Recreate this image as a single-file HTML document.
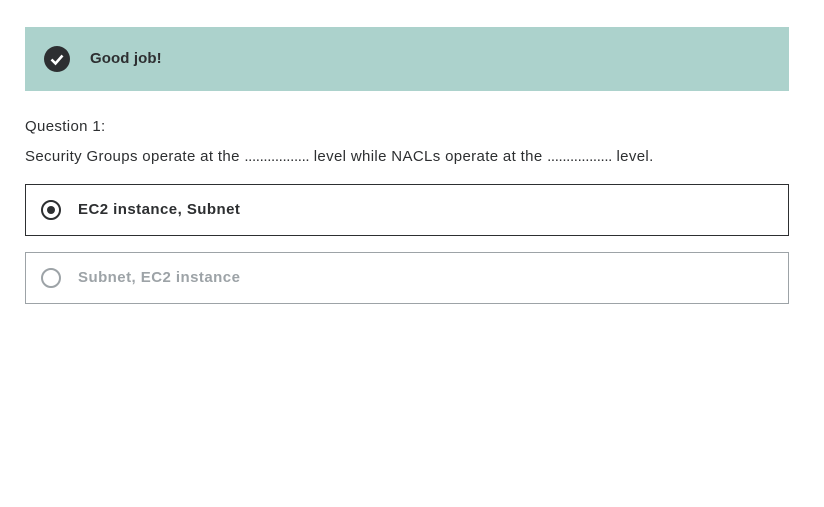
<!DOCTYPE html>
<html><head><style>
body{margin:0;background:#fff;font-family:"Liberation Sans",sans-serif;color:#2d2f31;width:824px;height:507px;overflow:hidden;position:relative}
.banner{position:absolute;left:25px;top:27px;width:764px;height:64px;background:#acd2cc}
.chk{position:absolute;left:19px;top:19px;width:26px;height:26px;border-radius:50%;background:#2d2f31}
.banner b{position:absolute;left:65px;top:23px;font-size:15px;letter-spacing:.1px}
.q{position:absolute;left:25px;font-size:15px;letter-spacing:.35px;white-space:nowrap}
.d{letter-spacing:-.35px}
.opt{position:absolute;left:25px;width:762px;height:50px;border:1px solid #2d2f31}
.opt .r{position:absolute;left:15px;top:15px;width:16px;height:16px;border:2px solid #2d2f31;border-radius:50%}
.opt .r i{position:absolute;left:4px;top:4px;width:8px;height:8px;border-radius:50%;background:#2d2f31}
.opt b{position:absolute;left:52px;top:16px;font-size:15px;letter-spacing:.45px}
.dis{border-color:#9da3a7;color:#9da3a7}
.dis .r{border-color:#9da3a7}
</style></head><body>
<div class="banner"><div class="chk"><svg width="26" height="26"><path d="M7.5 13.5l4 4 7-8" stroke="#fff" stroke-width="2.6" fill="none"/></svg></div><b>Good job!</b></div>
<div class="q" style="top:118px">Question 1:</div>
<div class="q" style="top:148px">Security Groups operate at the <span class="d">.................</span> level while NACLs operate at the <span class="d">.................</span> level.</div>
<div class="opt" style="top:184px"><div class="r"><i></i></div><b>EC2 instance, Subnet</b></div>
<div class="opt dis" style="top:252px"><div class="r"></div><b>Subnet, EC2 instance</b></div>
</body></html>
